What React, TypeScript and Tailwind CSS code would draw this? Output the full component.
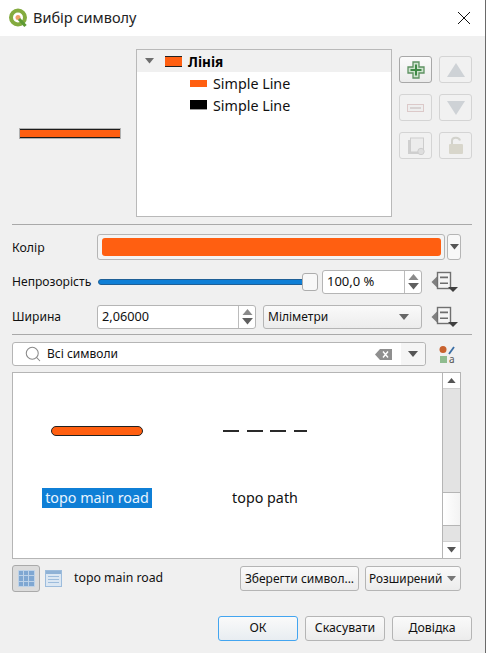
import { Search } from "lucide-react";

const font = "font-['Noto_Sans','Open_Sans',sans-serif] text-[13px] text-[#111]";

const ToolButton = ({ children, active }: { children: React.ReactNode; active?: boolean }) => (
  <div
    className={`w-[33px] h-[27px] flex items-center justify-center rounded-[3px] border ${
      active ? "border-[#a8a8a8] bg-gradient-to-b from-[#fbfbfb] to-[#ebebeb]" : "border-[#d4d4d4] bg-[#f1f1f1]"
    }`}
  >
    {children}
  </div>
);

const Triangle = ({ down, size = 8, color = "#5f5f5f" }: { down?: boolean; size?: number; color?: string }) => (
  <svg width={size} height={size / 2 + 1} viewBox="0 0 10 6">
    <path d={down ? "M0 0H10L5 6Z" : "M0 6H10L5 0Z"} fill={color} />
  </svg>
);

const Spin = ({ className }: { className: string }) => (
  <div className={`flex flex-col items-center justify-center gap-[3px] border-l border-[#bcbcbc] ${className}`}>
    <Triangle size={11} color="#8a8a8a" />
    <Triangle down size={11} color="#5f5f5f" />
  </div>
);

const DataDefined = () => (
  <svg width="27" height="22" viewBox="0 0 27 22" className="shrink-0">
    <path d="M0.5 11L6 5.5V16.5Z" fill="#808080" />
    <rect x="6.5" y="1.5" width="13" height="16" fill="#f5f5f5" stroke="#707070" strokeWidth="1.4" />
    <path d="M9 5.5H17V7.2H9ZM9 11.5H17V13H9Z" fill="#6e6e6e" />
    <path d="M17 16H27L22 21Z" fill="#3f3f3f" />
  </svg>
);

const App = () => {
  return (
    <div className={`${font} w-[486px] h-[653px] flex flex-col bg-[#f0f0f0] border-r border-[#6a6a6a] overflow-hidden`}>
      {/* title bar */}
      <header className="h-9 shrink-0 bg-white flex items-center pl-2 pr-[7px]">
        <svg width="20" height="20" viewBox="0 0 20 20" className="shrink-0">
          <circle cx="10" cy="9.5" r="7" fill="none" stroke="#84ab3f" strokeWidth="4" />
          <circle cx="10" cy="9.5" r="2.5" fill="#eda06a" />
          <path d="M11 11L17.5 18" stroke="#5d9a34" strokeWidth="3.2" />
        </svg>
        <span className="ml-[5px] text-[14.5px] text-[#222] flex-1">Вибір символу</span>
        <svg width="14" height="14" viewBox="0 0 14 14" className="mr-[7px] shrink-0">
          <path d="M1 1L13 13M13 1L1 13" stroke="#111" strokeWidth="1" />
        </svg>
      </header>

      <main className="flex-1 flex flex-col px-3 pt-[13px]">
        {/* symbol layers */}
        <section className="flex h-[168px] shrink-0">
          <div className="w-[124px] shrink-0 flex items-center pl-2">
            <div className="w-[100px] h-[9px] bg-[#ff5f11] border-y border-y-[#1c1c1c] outline outline-1 outline-[#b0b0b0] mt-[1px]" />
          </div>
          <div className="w-[256px] shrink-0 bg-white border border-[#b9b9b9] leading-[22px]">
            <div className="h-[22px] bg-[#f0f0f0] flex items-center pl-2">
              <Triangle down size={9} color="#6e6e6e" />
              <div className="w-[17px] h-[11px] ml-[11px] bg-[#ff5f11] border-y border-y-[#222]" />
              <span className="ml-[6px] pt-px font-bold text-[13.5px] text-black">Лінія</span>
            </div>
            <div className="h-[22px] flex items-center pl-[53px]">
              <div className="w-[17px] h-[7px] bg-[#ff5f11]" />
              <span className="ml-[6px] pt-px text-[14.3px]">Simple Line</span>
            </div>
            <div className="h-[22px] flex items-center pl-[53px]">
              <div className="w-[17px] h-[10px] bg-black border-b border-b-[#999]" />
              <span className="ml-[6px] pt-px text-[14.3px]">Simple Line</span>
            </div>
          </div>
          <div className="ml-[7px] mt-[7px] grid grid-cols-[33px_33px] auto-rows-[27px] gap-x-[7px] gap-y-[11px]">
            <ToolButton active>
              <svg width="18" height="18" viewBox="0 0 18 18">
                <path d="M6 1H12V6H17V12H12V17H6V12H1V6H6Z" fill="#cfe3cf" stroke="#5d9161" strokeWidth="1.3" />
                <path d="M9 3.5V14.5M3.5 9H14.5" stroke="#3f8a46" strokeWidth="2" />
              </svg>
            </ToolButton>
            <ToolButton>
              <svg width="18" height="14" viewBox="0 0 18 14"><path d="M0 14H18L9 0Z" fill="#ced2d6" /></svg>
            </ToolButton>
            <ToolButton>
              <div className="w-[17px] h-[8px] bg-[#eee] border border-[#dcc9c9] flex items-center justify-center">
                <div className="w-[11px] h-[2px] bg-[#d8d2d2]" />
              </div>
            </ToolButton>
            <ToolButton>
              <svg width="18" height="14" viewBox="0 0 18 14"><path d="M0 0H18L9 14Z" fill="#ced2d6" /></svg>
            </ToolButton>
            <ToolButton>
              <svg width="18" height="18" viewBox="0 0 18 18">
                <rect x="1" y="3" width="12" height="14" fill="#cfcfcf" />
                <rect x="3.5" y="1" width="13" height="14" fill="#ececec" stroke="#cdcdcd" />
                <circle cx="14" cy="14.5" r="3.2" fill="#dedede" stroke="#cdcdcd" />
              </svg>
            </ToolButton>
            <ToolButton>
              <svg width="16" height="19" viewBox="0 0 16 19">
                <path d="M4 8V4.5C4 1 11 0.5 12 4.5" fill="none" stroke="#d2d2cc" strokeWidth="2" />
                <rect x="1" y="8" width="14" height="10" rx="1" fill="#d8d6cb" />
              </svg>
            </ToolButton>
          </div>
        </section>

        <div className="h-px bg-[#a9a9a9] w-[460px] mt-[7px] shrink-0" />

        {/* color */}
        <section className="flex items-center mt-[9px] h-[26px] shrink-0">
          <span className="w-[85px] pt-[2px] text-[12.3px]">Колір</span>
          <div className="w-[348px] h-[26px] rounded-[3px] border border-[#b5b5b5] bg-[#f4f4f4] p-[3px] pl-1">
            <div className="w-full h-full rounded-[3px] bg-[#ff5f11]" />
          </div>
          <div className="ml-[2px] w-[14px] h-[26px] rounded-[3px] border border-[#b5b5b5] bg-[#f8f8f8] flex items-center justify-center">
            <Triangle down size={9} color="#555" />
          </div>
        </section>

        {/* opacity */}
        <section className="flex items-center mt-[9px] h-[25px] shrink-0">
          <span className="w-[86px] pt-[2px] text-[12.1px]">Непрозорість</span>
          <div className="w-[220px] flex items-center">
            <div className="w-[205px] h-[6px] rounded-l-[3px] bg-[#0f7fd6] border border-[#1e5f96]" />
            <div className="w-[16px] h-[18px] -ml-px rounded-[3px] border border-[#adadad] bg-[#f8f8f8]" />
          </div>
          <div className="ml-[4px] w-[100px] h-[24px] rounded-[3px] border border-[#b5b5b5] bg-white flex items-center">
            <span className="pl-[4px] flex-1">100,0 %</span>
            <Spin className="w-[17px] h-full" />
          </div>
          <div className="ml-[9px]"><DataDefined /></div>
        </section>

        {/* width */}
        <section className="flex items-center mt-[10px] h-[25px] shrink-0">
          <span className="w-[85px] pt-px text-[12.1px]">Ширина</span>
          <div className="w-[159px] h-[24px] rounded-[3px] border border-[#b5b5b5] bg-white flex items-center">
            <span className="pl-[4px] flex-1 text-[12.7px]">2,06000</span>
            <Spin className="w-[17px] h-full" />
          </div>
          <div className="ml-[7px] w-[159px] h-[24px] rounded-[3px] border border-[#b5b5b5] bg-gradient-to-b from-[#fafafa] to-[#ececec] flex items-center justify-between pl-[4px] pr-[12px]">
            <span className="text-[12px]">Міліметри</span>
            <Triangle down size={10} color="#666" />
          </div>
          <div className="ml-[9px]"><DataDefined /></div>
        </section>

        <div className="h-px bg-[#a9a9a9] w-[460px] mt-[5px] shrink-0" />

        {/* search */}
        <section className="flex items-center mt-[7px] h-[24px] shrink-0">
          <div className="w-[414px] h-[24px] rounded-[3px] border border-[#b5b5b5] bg-white flex items-center pl-[11px]">
            <Search size={18} strokeWidth={1.4} className="text-[#8a8a8a] shrink-0" />
            <span className="ml-[5px] flex-1 text-[12px]">Всі символи</span>
            <svg width="17" height="11" viewBox="0 0 17 11" className="shrink-0">
              <path d="M5 0H17V11H5L0 5.5Z" fill="#8f8f8f" />
              <path d="M8 2.5L13 8.5M13 2.5L8 8.5" stroke="#fff" strokeWidth="1.4" />
            </svg>
            <div className="ml-[9px] w-[24px] h-full flex items-center justify-center bg-[#f5f5f5] rounded-r-[3px]">
              <Triangle down size={10} color="#555" />
            </div>
          </div>
          <div className="ml-[12px] w-[18px] shrink-0 flex flex-col">
            <svg width="18" height="10" viewBox="0 0 18 10">
              <circle cx="5" cy="4.5" r="3.5" fill="#c8622e" />
              <path d="M11 9L16 2" stroke="#3a6ea5" strokeWidth="1.8" />
            </svg>
            <div className="flex items-center h-[8px]">
              <div className="ml-[2px] w-[7px] h-[7px] bg-[#8fbc8f]" />
              <span className="ml-[2px] text-[10px] leading-[8px] text-[#555]">a</span>
            </div>
          </div>
        </section>

        {/* symbol list */}
        <section className="flex w-[449px] h-[187px] mt-[6px] shrink-0 bg-white border border-[#b5b5b5]">
          <div className="flex-1 grid grid-cols-[168px_168px] content-start">
            <div className="flex flex-col items-center">
              <div className="w-[92px] h-[10px] mt-[53px] rounded-full bg-[#ff5f11] border border-[#222]" />
              <span className="mt-[52px] w-[110px] h-[20px] text-center leading-[20px] bg-[#0f7fd6] text-[#e8f4ff] text-[14.3px]">topo main road</span>
            </div>
            <div className="flex flex-col items-center">
              <div className="w-[84px] h-[2px] mt-[57px] bg-[repeating-linear-gradient(90deg,#2a2a2a_0,#2a2a2a_16px,transparent_16px,transparent_23.7px)]" />
              <span className="mt-[56px] h-[20px] leading-[20px] text-[14.3px]">topo path</span>
            </div>
          </div>
          <div className="w-[18px] border-l border-[#b5b5b5] flex flex-col items-center bg-[#e3e3e3]">
            <div className="h-[16px] w-full bg-white border-b border-[#d0d0d0] flex items-center justify-center"><Triangle size={9} color="#555" /></div>
            <div className="w-full h-[103px]" />
            <div className="w-full h-[34px] bg-gradient-to-r from-white to-[#f3f3f3] border-y border-[#b5b5b5]" />
            <div className="w-full flex-1" />
            <div className="w-full h-[17px] bg-white border-t border-[#d0d0d0] flex items-center justify-center"><Triangle down size={9} color="#555" /></div>
          </div>
        </section>

        {/* view and save */}
        <section className="flex items-center w-[449px] mt-[6px] h-[27px] shrink-0">
          <div className="w-[28px] h-[27px] rounded-[3px] border border-[#aaa] bg-[#dcdcdc] flex items-center justify-center">
            <div className="w-[17px] h-[17px] bg-[#bdd2e8] rounded-[1px] grid grid-cols-3 gap-[1px] p-[1px]">
              {Array.from({ length: 9 }).map((_, i) => (
                <div key={i} className="bg-[#7fa7d2]" />
              ))}
            </div>
          </div>
          <div className="ml-[5px] w-[17px] h-[17px] border border-[#9dbcdc] bg-[#dbe7f3] flex flex-col gap-[2px]">
            <div className="h-[3px] bg-[#8fb2d6]" />
            <div className="h-px mx-[2px] bg-[#9dbcdc]" />
            <div className="h-px mx-[2px] bg-[#9dbcdc]" />
            <div className="h-px mx-[2px] bg-[#9dbcdc]" />
          </div>
          <span className="ml-[12px] flex-1 text-[12.3px]">topo main road</span>
          <div className="w-[119px] h-[25px] rounded-[3px] border border-[#b5b5b5] bg-gradient-to-b from-[#fafafa] to-[#ececec] flex items-center justify-center text-[12px]">
            Зберегти символ...
          </div>
          <div className="ml-[6px] w-[96px] h-[25px] rounded-[3px] border border-[#b5b5b5] bg-gradient-to-b from-[#fafafa] to-[#ececec] flex items-center justify-between pl-[3px] pr-[4px] text-[11.8px]">
            Розширений
            <Triangle down size={9} color="#777" />
          </div>
        </section>

        {/* dialog buttons */}
        <footer className="flex justify-end gap-[7px] w-[460px] mt-[24px] shrink-0 text-[12.3px]">
          <div className="w-[80px] h-[25px] rounded-[3px] border border-[#43a5f0] bg-gradient-to-b from-[#fafafa] to-[#e8edf1] flex items-center justify-center">ОК</div>
          <div className="w-[80px] h-[25px] rounded-[3px] border border-[#b5b5b5] bg-gradient-to-b from-[#fafafa] to-[#ececec] flex items-center justify-center">Скасувати</div>
          <div className="w-[80px] h-[25px] rounded-[3px] border border-[#b5b5b5] bg-gradient-to-b from-[#fafafa] to-[#ececec] flex items-center justify-center">Довідка</div>
        </footer>
      </main>
    </div>
  );
};

export default App;
